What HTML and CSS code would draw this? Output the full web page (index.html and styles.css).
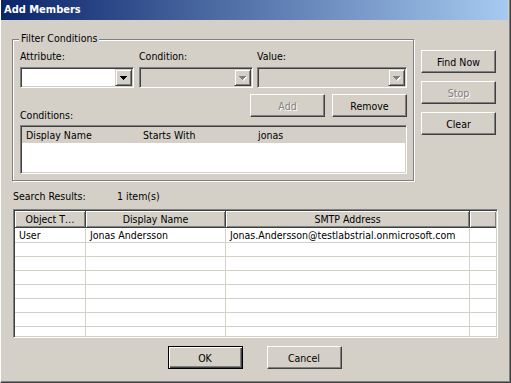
FILE: index.html
```html
<!DOCTYPE html>
<html lang="en">

<head>
    <meta charset="UTF-8">
    <meta name="viewport" content="width=device-width, initial-scale=1.0">
    <title>Add Members</title>
    <link rel="stylesheet" href="styles.css">
</head>

<body>
    <div class="window">
        <div class="titlebar">Add Members</div>
        <div class="client">
            <div class="top">
                <div class="group">
                    <span class="legend">Filter Conditions</span>
                    <div class="fields">
                        <div class="field f-attr">
                            <label class="lbl">Attribute:</label>
                            <div class="combo">
                                <span class="drop">
                                    <svg width="7" height="4" viewBox="0 0 7 4"><path d="M0 0h7v1H0zM1 1h5v1H1zM2 2h3v1H2zM3 3h1v1H3z" fill="#000"/></svg>
                                </span>
                            </div>
                        </div>
                        <div class="field f-cond">
                            <label class="lbl">Condition:</label>
                            <div class="combo disabled">
                                <span class="drop">
                                    <svg width="8" height="5" viewBox="0 0 8 5"><path d="M1 1h7v1H1zM2 2h5v1H2zM3 3h3v1H3zM4 4h1v1H4z" fill="#fff"/><path d="M0 0h7v1H0zM1 1h5v1H1zM2 2h3v1H2zM3 3h1v1H3z" fill="#808080"/></svg>
                                </span>
                            </div>
                        </div>
                        <div class="field f-value">
                            <label class="lbl">Value:</label>
                            <div class="combo disabled">
                                <span class="drop">
                                    <svg width="8" height="5" viewBox="0 0 8 5"><path d="M1 1h7v1H1zM2 2h5v1H2zM3 3h3v1H3zM4 4h1v1H4z" fill="#fff"/><path d="M0 0h7v1H0zM1 1h5v1H1zM2 2h3v1H2zM3 3h1v1H3z" fill="#808080"/></svg>
                                </span>
                            </div>
                        </div>
                    </div>
                    <div class="row2">
                        <span class="lbl cond-label">Conditions:</span>
                        <div class="row2-btns">
                            <button class="btn" disabled>Add</button>
                            <button class="btn">Remove</button>
                        </div>
                    </div>
                    <div class="cond-list">
                        <div class="cond-row">
                            <span>Display Name</span>
                            <span>Starts With</span>
                            <span>jonas</span>
                        </div>
                    </div>
                </div>
                <div class="side">
                    <button class="btn">Find Now</button>
                    <button class="btn" disabled>Stop</button>
                    <button class="btn">Clear</button>
                </div>
            </div>

            <div class="results-label">
                <span class="rl-name">Search Results:</span>
                <span>1 item(s)</span>
            </div>

            <div class="results">
                <div class="header">
                    <span class="hcell">Object T…</span>
                    <span class="hcell">Display Name</span>
                    <span class="hcell">SMTP Address</span>
                    <span class="hcell filler"></span>
                </div>
                <div class="rows">
                    <div class="row">
                        <span class="cell">User</span>
                        <span class="cell">Jonas Andersson</span>
                        <span class="cell">Jonas.Andersson@testlabstrial.onmicrosoft.com</span>
                        <span class="cell filler"></span>
                    </div>
                    <div class="row"><span class="cell"></span><span class="cell"></span><span class="cell"></span><span class="cell filler"></span></div>
                    <div class="row"><span class="cell"></span><span class="cell"></span><span class="cell"></span><span class="cell filler"></span></div>
                    <div class="row"><span class="cell"></span><span class="cell"></span><span class="cell"></span><span class="cell filler"></span></div>
                    <div class="row"><span class="cell"></span><span class="cell"></span><span class="cell"></span><span class="cell filler"></span></div>
                    <div class="row"><span class="cell"></span><span class="cell"></span><span class="cell"></span><span class="cell filler"></span></div>
                    <div class="row"><span class="cell"></span><span class="cell"></span><span class="cell"></span><span class="cell filler"></span></div>
                    <div class="row"><span class="cell"></span><span class="cell"></span><span class="cell"></span><span class="cell filler"></span></div>
                </div>
            </div>

            <div class="footer">
                <button class="btn default">OK</button>
                <button class="btn">Cancel</button>
            </div>
        </div>
    </div>
</body>

</html>
```

FILE: styles.css
```css
* {
    box-sizing: border-box;
}

body {
    margin: 0;
    background-color: #d4d0c8;
    font-family: 'DejaVu Sans Condensed', 'DejaVu Sans', sans-serif;
    font-stretch: condensed;
    font-size: 10.5px;
    color: #000;
}

.window {
    width: 511px;
    height: 383px;
    background-color: #d4d0c8;
    border-left: 1px solid #fff;
    border-right: 1px solid #404040;
    border-bottom: 1px solid #404040;
    box-shadow: inset -1px -1px 0 #808080;
    display: flex;
    flex-direction: column;
    overflow: hidden;
}

.titlebar {
    height: 20px;
    margin-right: 2px;
    padding-left: 3px;
    line-height: 20px;
    font-size: 11px;
    font-weight: bold;
    color: #fff;
    background-image: linear-gradient(to right, #0a246a, #a6caf0);
}

.client {
    display: flex;
    flex-direction: column;
    padding: 19px 11px 0 11px;
}

.top {
    display: flex;
    align-items: flex-start;
}

/* group box */
.group {
    position: relative;
    width: 402px;
    border: 1px solid #808080;
    box-shadow: 1px 1px 0 #fff, inset 1px 1px 0 #fff;
    padding: 10px 6px 6px 7px;
}

.legend {
    position: absolute;
    top: -8px;
    left: 6px;
    padding: 0 2px;
    line-height: 13px;
    background-color: #d4d0c8;
}

.lbl {
    display: block;
    line-height: 13px;
}

.fields {
    display: flex;
}

.f-attr {
    width: 119px;
}

.f-cond {
    width: 118px;
}

.f-value {
    width: 150px;
}

.f-attr .combo,
.f-cond .combo {
    width: 114px;
}

.combo {
    margin-top: 4px;
    height: 21px;
    padding: 1px;
    display: flex;
    justify-content: flex-end;
    background-color: #fff;
    border: 1px solid;
    border-color: #808080 #fff #fff #808080;
    box-shadow: inset 1px 1px 0 #404040, inset -1px -1px 0 #d4d0c8;
}

.combo.disabled {
    background-color: #d4d0c8;
}

.drop {
    width: 17px;
    height: 17px;
    display: flex;
    align-items: center;
    justify-content: center;
    padding-right: 1px;
    background-color: #d4d0c8;
    border: 1px solid;
    border-color: #d4d0c8 #404040 #404040 #d4d0c8;
    box-shadow: inset 1px 1px 0 #fff, inset -1px -1px 0 #808080;
}

.combo.disabled .drop svg {
    margin-left: 1px;
    margin-top: 1px;
}

.row2 {
    display: flex;
    justify-content: space-between;
    margin-top: 6px;
}

.cond-label {
    margin-top: 15px;
}

.row2-btns {
    display: flex;
    gap: 7px;
}

.btn {
    width: 75px;
    height: 23px;
    padding: 0;
    font-family: inherit;
    font-stretch: inherit;
    font-size: 10.5px;
    color: #000;
    background-color: #d4d0c8;
    border: 1px solid;
    border-color: #fff #404040 #404040 #fff;
    box-shadow: inset -1px -1px 0 #808080;
    border-radius: 0;
}

.btn:disabled {
    color: #808080;
    text-shadow: 1px 1px 0 #fff;
}

.btn.default {
    border-color: #000;
    box-shadow: inset 1px 1px 0 #fff, inset -1px -1px 0 #404040, inset -2px -2px 0 #808080;
}

.cond-list {
    margin-top: 3px;
    height: 49px;
    padding: 1px;
    background-color: #fff;
    border: 1px solid;
    border-color: #808080 #fff #fff #808080;
    box-shadow: inset 1px 1px 0 #404040, inset -1px -1px 0 #d4d0c8;
}

.cond-row {
    display: grid;
    grid-template-columns: 117px 115px 1fr;
    line-height: 16px;
    background-color: #d4d0c8;
}

.cond-row span {
    padding-left: 4px;
}

.side {
    display: flex;
    flex-direction: column;
    gap: 8px;
    margin-left: 7px;
    margin-top: 11px;
}

/* search results */
.results-label {
    display: flex;
    margin-top: 9px;
    padding-left: 1px;
    line-height: 13px;
}

.rl-name {
    width: 104px;
}

.results {
    margin-top: 6px;
    margin-left: 1px;
    width: 485px;
    height: 129px;
    padding: 1px;
    overflow: hidden;
    background-color: #fff;
    border: 1px solid;
    border-color: #808080 #fff #fff #808080;
    box-shadow: inset 1px 1px 0 #404040, inset -1px -1px 0 #d4d0c8;
}

.header,
.row {
    display: grid;
    grid-template-columns: 71px 140px 244px 1fr;
}

.hcell {
    height: 17px;
    line-height: 16px;
    text-align: center;
    white-space: nowrap;
    overflow: hidden;
    background-color: #d4d0c8;
    border-right: 1px solid #404040;
    border-bottom: 1px solid #404040;
    box-shadow: inset 1px 1px 0 #fff, inset -1px -1px 0 #808080;
}

.hcell.filler {
    border-right: 0;
}

.rows {
    padding-top: 1px;
}

.row {
    height: 14px;
    border-bottom: 1px solid #d4d0c8;
}

.cell {
    line-height: 13px;
    padding-left: 4px;
    white-space: nowrap;
    overflow: hidden;
    border-right: 1px solid #d4d0c8;
}

.cell.filler {
    border-right: 0;
}

.footer {
    display: flex;
    justify-content: center;
    gap: 24px;
    margin-top: 8px;
    padding-right: 2px;
}
```
